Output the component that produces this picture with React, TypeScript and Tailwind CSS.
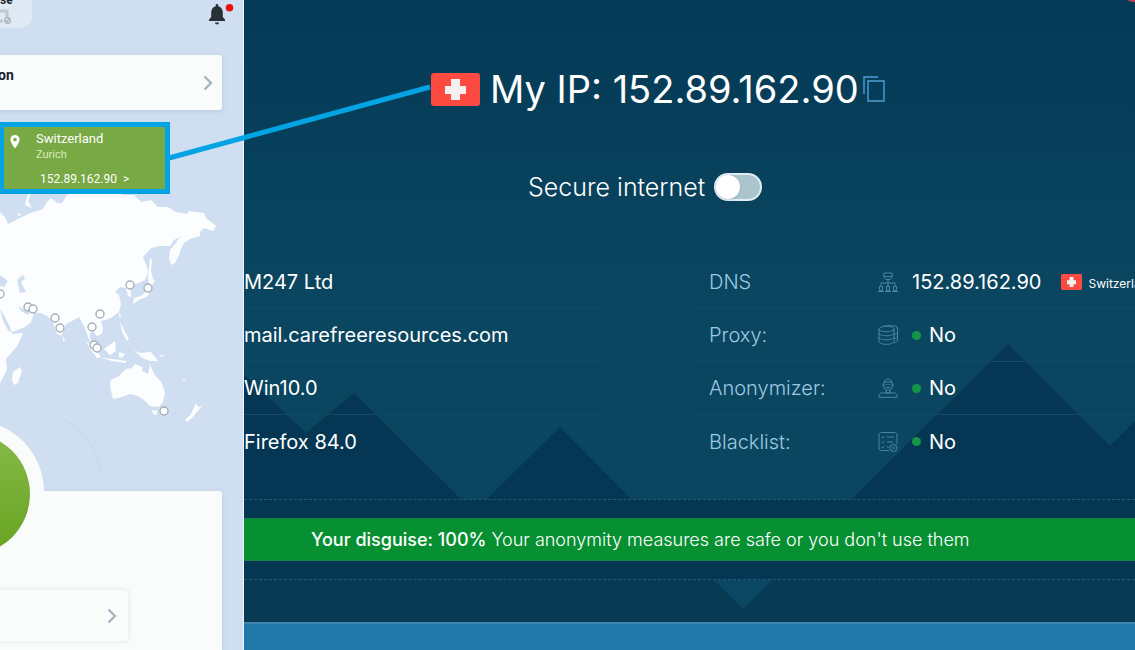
import { ReactNode } from "react";

const pins = [
  [0, 294], [28, 307], [33, 309], [55, 318], [60, 328], [100, 314], [92, 327],
  [94, 345], [97, 348], [130, 285], [148, 288], [164, 411],
];

function WorldMap() {
  return (
    <svg viewBox="0 190 244 240" className="block w-full" aria-hidden="true">
      <g fill="#fcfdfe">
        <path d="M0 212L5 217 8 224 20 218 28 214 37 211 43 209 47 202 51 198 57 203 62 203 67 195 80 190 120 190 122 195 134 195 141 202 151 200 158 207 168 207 176 212 187 214 189 211 204 213 206 218 211 222 216 226 213 231 204 228 200 232 200 236 190 239 184 243 181 249 179 255 175 263 171 265 169 258 170 250 175 244 180 237 174 240 170 246 160 246 151 248 143 257 146 264 148 272 145 280 136 284 128 285 131 292 131 297 128 296 126 288 120 287 115 292 119 295 121 304 119 312 111 318 105 320 101 321 103 328 102 334 97 336 93 331 90 333 90 339 95 348 92 346 88 337 85 328 79 317 74 320 66 324 64 330 61 336 57 334 53 322 47 316 41 313 34 313 31 322 25 327 12 332 7 325 0 310Z" />
        <path d="M0 310L4 320 10 331 13 334 23 333 18 345 6 359 7 370 0 383Z" />
        <path d="M20 367L22 371 18 383 14 385 12 379 13 372Z" />
        <path d="M110 384L111 380 119 376 126 369 132 368 135 364 142 367 142 371 148 374 150 364 154 374 162 383 165 393 163 402 159 407 150 406 144 400 138 396 130 394 122 397 113 399 111 391Z" />
        <path d="M152 410L158 411 156 415 153 414Z" />
        <path d="M196 403L198 407 202 406 197 412 192 418 187 422 185 420 191 414Z" />
        <path d="M115 341L116 351 110 355 104 349Z" />
        <path d="M86 341L94 347 101 357 97 358 91 350Z" />
        <path d="M101 358L113 359 126 361 126 363 112 361Z" />
        <path d="M134 350L140 353 151 352 158 361 150 361 142 358Z" />
        <path d="M119 352L125 354 122 358 119 357Z" />
        <path d="M120 322L123 328 129 339 127 341 122 332Z" />
        <path d="M150 258L152 260 151 271 153 279 155 281 151 287 148 296 139 300 133 304 134 298 143 295 149 288 148 276Z" />
        <path d="M27 196L31 193 28 201 32 208 25 205Z" />
        <path d="M63 336L65 340 63 342Z" />
        <path d="M119 313l2 1-1 4-1-2zM159 355l5 0-2 2zM182 379l4 1-2 1zM18 213l3 1-1 2-2-1z" />
        <path d="M0 427L8 430H0z" />
      </g>
      <g fill="#cfdff1">
        <path d="M17 280L23 275 25 279 21 282 26 292 20 293Z" />
        <path d="M0 275L8 281 4 287 0 286Z" />
        <path d="M18 306L25 310 31 310 28 315 21 311Z" />
        <path d="M0 309L4 315 11 329 9 332 3 321Z" />
      </g>
      <g fill="#fff" stroke="#a3b1b6" strokeWidth="1.4">
        {pins.map(([cx, cy]) => (
          <circle key={`${cx}-${cy}`} cx={cx} cy={cy} r="4" />
        ))}
      </g>
    </svg>
  );
}

function Chevron() {
  return (
    <svg width="10" height="16" viewBox="0 0 10 16" fill="none" stroke="#a3b6c2" strokeWidth="2.4" aria-hidden="true">
      <path d="M1.500 1.500L8 8L1.500 14.500" />
    </svg>
  );
}

function VpnPanel() {
  return (
    <aside className="relative flex min-h-screen w-[244px] shrink-0 flex-col overflow-hidden bg-[#cfdff1] font-[Roboto,sans-serif] shadow-[inset_-1px_0_#f0f6fb]">
      <div className="flex h-[55px] justify-between">
        <div className="h-7 w-8 overflow-hidden rounded-br-xl bg-[#dfeaf5]">
          <p className="-mt-2 text-xs leading-4 font-bold text-[#1c2730]">se</p>
          <svg width="12" height="16" viewBox="0 0 12 16" fill="none" stroke="#a5b0b8" strokeWidth="1.3" aria-hidden="true">
            <path d="M0 3h7v6M0 13h3" stroke="#bcc7cf" strokeWidth="3" />
            <circle cx="7.500" cy="12.500" r="2.800" />
            <path d="M5.800 14.200L9.300 10.800" />
          </svg>
        </div>
        <button className="mt-[3px] mr-2 h-6 w-7" aria-label="Notifications">
          <svg width="28" height="22" viewBox="0 0 28 22" aria-hidden="true">
            <path d="M1 17v-1.500l2.200-2.500V8.500c0-3.500 2-5.700 4.500-6.300V1.300a1.300 1.300 0 0 1 2.600 0v.9c2.500.6 4.500 2.800 4.500 6.300V13l2.200 2.500V17zM7 18.500h4a2 2 0 0 1-4 0z" fill="#263035" />
            <circle cx="21.500" cy="3.800" r="3.800" fill="#ee1111" />
          </svg>
        </button>
      </div>

      <button className="mr-[22px] flex h-[55px] justify-between rounded-r-[3px] bg-[#fafbfb] pr-[9px] shadow-[0_1px_4px_#9eb4c880]">
        <span className="-ml-0.5 pt-3 text-sm leading-4 font-bold text-[#17202a]">on</span>
        <span className="self-center">
          <Chevron />
        </span>
      </button>

      {/* Current server */}
      <button className="relative z-10 mt-3 flex h-[72px] w-[170px] gap-4 border-[5px] border-l-4 border-[#04a3e4] bg-[#78a945] pt-1 pl-1.5 text-left text-white">
        <svg width="10" height="14" viewBox="0 0 10 14" className="mt-1 shrink-0" aria-hidden="true">
          <path d="M5 0a4.600 4.600 0 0 0-4.600 4.600C.4 8 5 13.500 5 13.500S9.600 8 9.600 4.600A4.600 4.600 0 0 0 5 0zm0 2.800a1.800 1.800 0 1 1 0 3.600 1.800 1.800 0 0 1 0-3.600z" fill="#fff" fillRule="evenodd" />
        </svg>
        <span className="flex flex-col">
          <span className="text-[13px] leading-4">Switzerland</span>
          <span className="text-[11px] leading-4 text-[#d7e9bd]">Zurich</span>
          <span className="mt-2 pl-1 text-xs leading-4">152.89.162.90&nbsp; &gt;</span>
        </span>
      </button>

      <div className="-mt-1">
        <WorldMap />
      </div>

      <div className="relative mt-[61px] mr-[22px] flex flex-1 flex-col rounded-tr-[3px] bg-[#fafbfb] pt-[99px] shadow-[0_1px_4px_#9eb4c880]">
        <svg width="140" height="160" viewBox="0 0 140 160" className="absolute -top-[74px] left-0" aria-hidden="true">
          <defs>
            <linearGradient id="power" x1="0" y1="0" x2="0" y2="1">
              <stop offset="0" stopColor="#86ba49" />
              <stop offset="1" stopColor="#66a31f" />
            </linearGradient>
          </defs>
          <path d="M58 0C82 10 97 30 102 56" fill="none" stroke="#cadbed" strokeWidth="2" />
          <circle cx="-28" cy="75" r="72" fill="#fafbfb" />
          <circle cx="-31" cy="77" r="61" fill="url(#power)" />
        </svg>
        <button className="relative flex h-[51px] w-32 items-center justify-end rounded-r-sm bg-[#fafbfb] pr-[11px] shadow-[0_0_5px_#b4bec366]" aria-label="Details">
          <Chevron />
        </button>
      </div>
    </aside>
  );
}

function Flag({ className }: { className: string }) {
  return (
    <svg viewBox="0 0 49 33" preserveAspectRatio="none" className={className} aria-hidden="true">
      <rect width="49" height="33" rx="3" fill="#fd4b42" />
      <path d="M20 6h9v7h6v8h-6v6h-9v-6h-6v-8h6z" fill="#f4f0ef" />
    </svg>
  );
}

const icons = {
  network: (
    <>
      <path d="M6 1h8v4.500l-2 2H8l-2-2zM6 4.500h8M10 7.500v6.500M3 14v-3h14v3" />
      <path d="M1.500 14.500h3v4h-3zM8.500 14.500h3v4h-3zM15.500 14.500h3v4h-3zM0 19.500h6M7 19.500h6M14 19.500h6" />
    </>
  ),
  database: (
    <>
      <ellipse cx="8.500" cy="4" rx="7.500" ry="2.800" />
      <path d="M1 4v12.500c0 1.600 3.400 2.800 7.500 2.800s7.500-1.200 7.500-2.800V4M1 8c0 1.600 3.400 2.800 7.500 2.800S16 9.600 16 8M1 12c0 1.600 3.400 2.800 7.500 2.800S16 13.600 16 12" />
      <path d="M5 1.500C9 0 19.500 0 19.500 3v12c0 1.500-1.500 2.500-3.500 3M19.500 7c0 1.200-1.500 2-3.500 2.500M19.500 11c0 1.200-1.500 2-3.500 2.500" />
    </>
  ),
  agent: (
    <>
      <path d="M6 4h8v6l-2 2H8l-2-2zM6.500 4c0-4 7-4 7 0M5 5.500v3M15 5.500v3M8 6.500h1.500M10.500 6.500H12M8 9.500h4" />
      <path d="M8 12v3h4v-3M1 19.300v-2c0-1.500 1-2.300 3-2.300h12c2 0 3 .8 3 2.300v2z" />
    </>
  ),
  checklist: (
    <>
      <path d="M11 18.500H3.500C2 18.500 1 17.500 1 16V3c0-1.500 1-2.500 2.500-2.500h13C18 .5 19 1.500 19 3v9" />
      <path d="M3.500 5l1 1 2-2M3.500 10l1 1 2-2M3.500 15l1 1 2-2M9 5h7M9 10h6M9 15h2" />
      <circle cx="15.500" cy="16" r="3.600" />
      <path d="M14 14.500l3 3M17 14.500l-3 3" />
    </>
  ),
};

function RowIcon({ name }: { name: keyof typeof icons }) {
  return (
    <svg width="20" height="20" viewBox="0 0 20 20" fill="none" stroke="#4685a5" aria-hidden="true">
      {icons[name]}
    </svg>
  );
}

function Row({ label, icon, children }: { label: string; icon: keyof typeof icons; children: ReactNode }) {
  return (
    <div className="flex h-[53px] items-center border-b border-[#134b67] pl-3 last:border-0">
      <dt className="flex w-[203px] shrink-0 items-center justify-between pr-[14px] font-light text-[#9dc9e0]">
        {label}
        <RowIcon name={icon} />
      </dt>
      <dd className="flex items-center whitespace-nowrap">{children}</dd>
    </div>
  );
}

function No() {
  return (
    <>
      <span className="mr-2 size-[9px] rounded-full bg-[#159647]" />
      No
    </>
  );
}

function Mountains() {
  return (
    <svg viewBox="244 340 891 160" preserveAspectRatio="none" className="absolute bottom-0 left-0 h-[160px] w-full" aria-hidden="true">
      <path d="M244 375L306 434 354 394 461 500H244zM487 500L560 428 631 500zM852 500L1008 345 1110 447 1135 422V500z" fill="#053754" />
    </svg>
  );
}

export default function App() {
  return (
    <div className="relative flex min-h-screen overflow-hidden bg-[#043852]">
      <VpnPanel />

      <main className="flex min-w-0 flex-1 flex-col font-[Inter,sans-serif] text-white">
        <section className="relative flex h-[500px] flex-col overflow-hidden border-b border-dashed border-[#245a75] bg-linear-to-b from-[#043a56] to-[#0b4660] to-60%">
          <Mountains />
          <span className="absolute -top-2 -right-2 h-[10px] w-4 rounded-full bg-[#b8404f]" />
          <h1 className="relative mt-[65px] flex items-center pl-[187px] text-[38px] leading-[48px] whitespace-nowrap">
            <Flag className="mr-[10px] h-[33px] w-[49px]" />
            My IP: 152.89.162.90
            <button className="ml-1" aria-label="Copy IP">
              <svg width="22" height="26" viewBox="0 0 22 26" fill="none" stroke="#4d9fd3" strokeWidth="1.4" aria-hidden="true">
                <path d="M1 18V1h14M5 5h16v20H5z" />
              </svg>
            </button>
          </h1>
          <label className="relative mt-14 flex items-center pl-[284px] text-[25px] leading-9 font-light whitespace-nowrap">
            Secure internet
            <input type="checkbox" className="peer sr-only" />
            <span className="ml-[9px] flex h-7 w-12 items-center rounded-full border-2 border-[#e1edf2] bg-[#aac5ce] peer-checked:justify-end">
              <span className="size-6 rounded-full bg-white shadow" />
            </span>
          </label>

          <div className="relative mt-[51px] flex text-xl">
            <ul className="w-[359px] shrink-0">
              {["M247 Ltd", "mail.carefreeresources.com", "Win10.0", "Firefox 84.0"].map((text) => (
                <li key={text} className="flex h-[53px] items-center border-b border-[#134b67] last:border-0">
                  {text}
                </li>
              ))}
            </ul>
            <dl className="ml-[94px] min-w-0 flex-1">
              <Row label="DNS" icon="network">
                152.89.162.90
                <Flag className="ml-5 h-4 w-[21px]" />
                <span className="ml-1.5 pt-1 text-xs">Switzerland</span>
              </Row>
              <Row label="Proxy:" icon="database"><No /></Row>
              <Row label="Anonymizer:" icon="agent"><No /></Row>
              <Row label="Blacklist:" icon="checklist"><No /></Row>
            </dl>
          </div>
        </section>

        <div className="mt-[18px] flex h-[43px] items-center border-y border-[#17804f] bg-[#079032] pl-[67px] text-lg whitespace-nowrap">
          <p className="font-light">
            <strong className="font-medium">Your disguise: 100%</strong> Your anonymity measures are safe or you don't use them
          </p>
        </div>

        <div className="mt-[18px] flex h-[43px] justify-center border-t border-dashed border-[#245a75] bg-[#063b53]">
          <svg width="58" height="30" viewBox="0 0 58 30" className="mr-[-106px]" aria-hidden="true">
            <path d="M0 0h58L29 29z" fill="#0b4663" />
          </svg>
        </div>
        <div className="flex-1 border-t-2 border-[#3d85b0] bg-[#2277a9]" />
      </main>

      {/* Connector from the server card to the flag */}
      <svg width="270" height="90" viewBox="0 0 270 90" className="pointer-events-none absolute top-20 left-[165px] z-20" aria-hidden="true">
        <path d="M4 78L265 7" stroke="#04a3e4" strokeWidth="5" />
      </svg>
    </div>
  );
}
